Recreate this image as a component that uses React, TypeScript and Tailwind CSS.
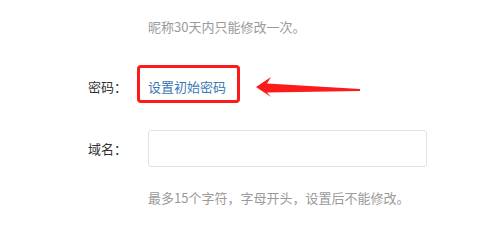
export default function App() {
  return (
    <div
      className="relative w-[479px] h-[240px] bg-white text-[13px] leading-[18px] overflow-hidden"
      style={{ fontFamily: '"Noto Sans CJK SC", "Noto Sans", sans-serif' }}
    >
      <div className="pl-[88px]">
        <p className="pt-[18px] pl-[60px] text-[#9a9a9a]">昵称30天内只能修改一次。</p>

        <div className="mt-[29px] flex items-start">
          <span className="w-[60px] pt-[13px] text-[#333]">密码：</span>
          <div className="-ml-[11px] w-[103px] h-[38px] border-[3px] border-[#fb1b1b] rounded-[4px] pl-[8px] pt-[10px]">
            <a className="text-[#3a78b5]">设置初始密码</a>
          </div>
        </div>

        <div className="mt-[27px] flex items-center">
          <span className="w-[60px] text-[#333]">域名：</span>
          <input className="w-[279px] h-[37px] border border-[#e2e2e2] rounded-[3px] outline-none" />
        </div>

        <p className="mt-[22px] pl-[60px] text-[#9a9a9a]">最多15个字符，字母开头，设置后不能修改。</p>
      </div>

      <svg className="absolute left-0 top-0" width="479" height="240" viewBox="0 0 479 240">
        <polygon
          points="256,87 271,77 267,83.5 360,89 360,91 267,92.5 271,97"
          fill="#fb1b1b"
        />
      </svg>
    </div>
  );
}
